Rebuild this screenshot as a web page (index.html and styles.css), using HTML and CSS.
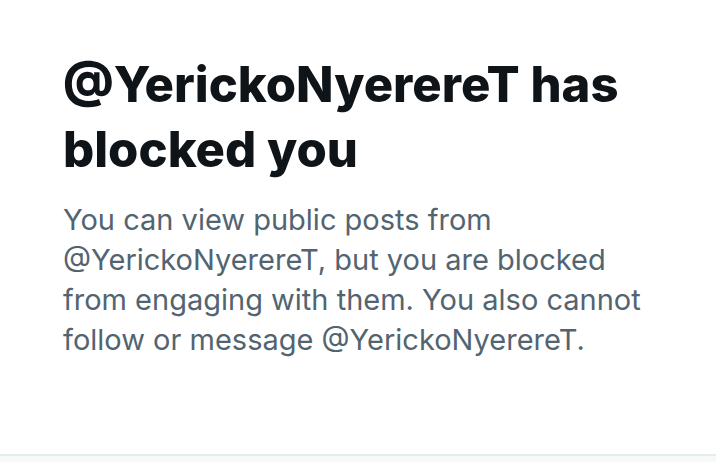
FILE: index.html
```html
<!DOCTYPE html>
<html>
<head>
<meta charset="utf-8">
<link rel="stylesheet" href="styles.css">
</head>
<body>
<main class="panel">
  <div class="content">
    <h1 class="title">@YerickoNyerereT has blocked you</h1>
    <p class="desc">You can view public posts from @YerickoNyerereT, but you are blocked from engaging with them. You also cannot follow or message @YerickoNyerereT.</p>
  </div>
  <div class="divider"></div>
  <div class="next"></div>
</main>
</body>
</html>
```

FILE: styles.css
```css
html, body {
  margin: 0;
  padding: 0;
  background: #ffffff;
}
.panel {
  width: 716px;
  height: 472px;
  display: flex;
  flex-direction: column;
}
.content {
  flex: 1;
  padding: 52px 0 0 63px;
}
.title {
  margin: 0;
  width: 610px;
  font-family: Inter, "Noto Sans", sans-serif;
  font-weight: 800;
  font-size: 49px;
  line-height: 65px;
  color: #0f1419;
}
.desc {
  margin: 18px 0 0 0;
  width: 610px;
  font-family: Inter, "Noto Sans", sans-serif;
  font-weight: 400;
  font-size: 29px;
  line-height: 40px;
  color: #536471;
}
.divider {
  height: 2px;
  background: #e6ebeb;
}
.next {
  height: 16px;
  background: linear-gradient(#f6f9f9 0, #f6f9f9 6px, #ffffff 6px);
}
```
